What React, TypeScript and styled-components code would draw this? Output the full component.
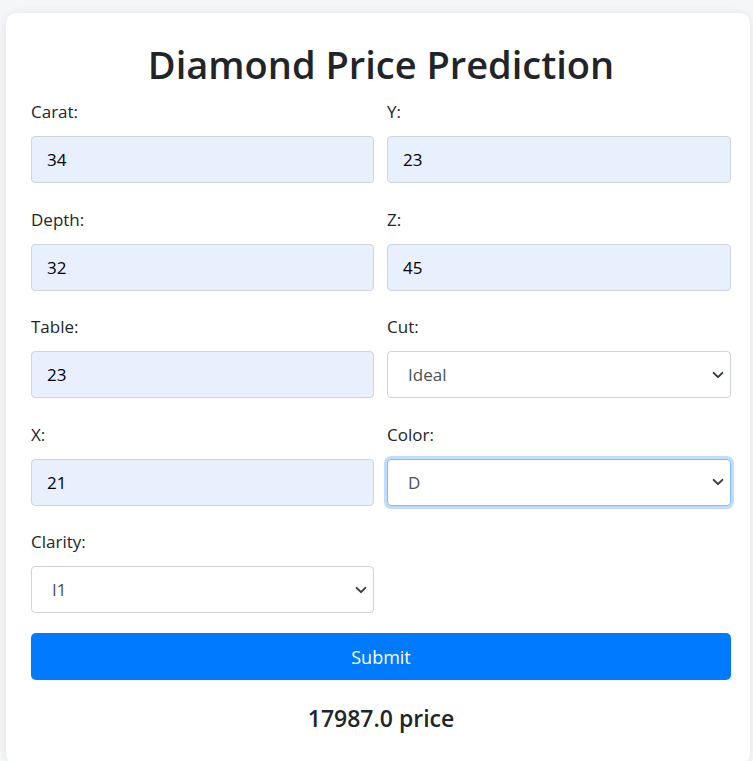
import React from "react";
import styled, { createGlobalStyle } from "styled-components";

const GlobalStyle = createGlobalStyle`
  html, body { margin: 0; padding: 0; background: #f5f6f8; }
  body { font-family: "Open Sans", "Noto Sans", sans-serif; color: #212529; }
  * { box-sizing: border-box; }
`;

const Page = styled.div`
  padding: 13px 3px 0 6px;
  width: 753px;
  height: 761px;
  overflow: hidden;
`;

const Card = styled.div`
  width: 744px;
  background: #fff;
  border-radius: 10px;
  box-shadow: 0 0 8px rgba(0, 0, 0, 0.08);
  padding: 27px 19px 32px 25px;
`;

const Title = styled.h1`
  margin: 0 0 12px;
  font-size: 38px;
  line-height: 48px;
  font-weight: 600;
  text-align: center;
  color: #212529;
`;

const Grid = styled.div`
  display: grid;
  grid-template-columns: 343px 344px;
  column-gap: 13px;
  row-gap: 24.5px;
`;

const Group = styled.div`
  display: flex;
  flex-direction: column;
  gap: 12px;
`;

const Label = styled.label`
  font-size: 17px;
  line-height: 24px;
  color: #212529;
`;

const Input = styled.input`
  height: 47px;
  width: 100%;
  padding: 0 15px;
  font-family: inherit;
  font-size: 17px;
  color: #000;
  background: #e8f0fe;
  border: 1px solid #ced4da;
  border-radius: 4px;
  outline: none;
`;

const chevron =
  "url(\"data:image/svg+xml,%3csvg xmlns='http://www.w3.org/2000/svg' viewBox='0 0 16 16'%3e%3cpath fill='none' stroke='%23343a40' stroke-linecap='round' stroke-linejoin='round' stroke-width='2.2' d='M3 5.5l5 5 5-5'/%3e%3c/svg%3e\")";

const Select = styled.select<{ $focused?: boolean }>`
  height: 47px;
  width: 100%;
  padding: 0 30px 0 20px;
  font-family: inherit;
  font-size: 17px;
  color: #495057;
  background: #fff ${chevron} no-repeat right 5px center / 14px 14px;
  appearance: none;
  -webkit-appearance: none;
  border: 1px solid ${(p) => (p.$focused ? "#80bdff" : "#ced4da")};
  border-radius: 4px;
  outline: none;
  box-shadow: ${(p) => (p.$focused ? "0 0 0 3px rgba(0, 123, 255, 0.25)" : "none")};
`;

const Button = styled.button`
  margin-top: 20px;
  width: 700px;
  height: 47px;
  border: none;
  border-radius: 5px;
  background: #007bff;
  color: #fff;
  font-family: inherit;
  font-size: 18px;
  cursor: pointer;
`;

const Result = styled.h3`
  margin: 24px 0 0;
  text-align: center;
  font-size: 23px;
  line-height: 28px;
  font-weight: 600;
  color: #212529;
`;

type Field =
  | { kind: "input"; label: string; value: string }
  | { kind: "select"; label: string; value: string; options: string[]; focused?: boolean };

const fields: Field[] = [
  { kind: "input", label: "Carat:", value: "34" },
  { kind: "input", label: "Y:", value: "23" },
  { kind: "input", label: "Depth:", value: "32" },
  { kind: "input", label: "Z:", value: "45" },
  { kind: "input", label: "Table:", value: "23" },
  { kind: "select", label: "Cut:", value: "Ideal", options: ["Fair", "Good", "Very Good", "Premium", "Ideal"] },
  { kind: "input", label: "X:", value: "21" },
  { kind: "select", label: "Color:", value: "D", options: ["D", "E", "F", "G", "H", "I", "J"], focused: true },
  { kind: "select", label: "Clarity:", value: "I1", options: ["I1", "SI2", "SI1", "VS2", "VS1", "VVS2", "VVS1", "IF"] },
];

export default function App() {
  return (
    <Page>
      <GlobalStyle />
      <Card>
        <Title>Diamond Price Prediction</Title>
        <Grid>
          {fields.map((f) => (
            <Group key={f.label}>
              <Label>{f.label}</Label>
              {f.kind === "input" ? (
                <Input defaultValue={f.value} />
              ) : (
                <Select defaultValue={f.value} $focused={f.focused}>
                  {f.options.map((o) => (
                    <option key={o}>{o}</option>
                  ))}
                </Select>
              )}
            </Group>
          ))}
        </Grid>
        <Button>Submit</Button>
        <Result>17987.0 price</Result>
      </Card>
    </Page>
  );
}
